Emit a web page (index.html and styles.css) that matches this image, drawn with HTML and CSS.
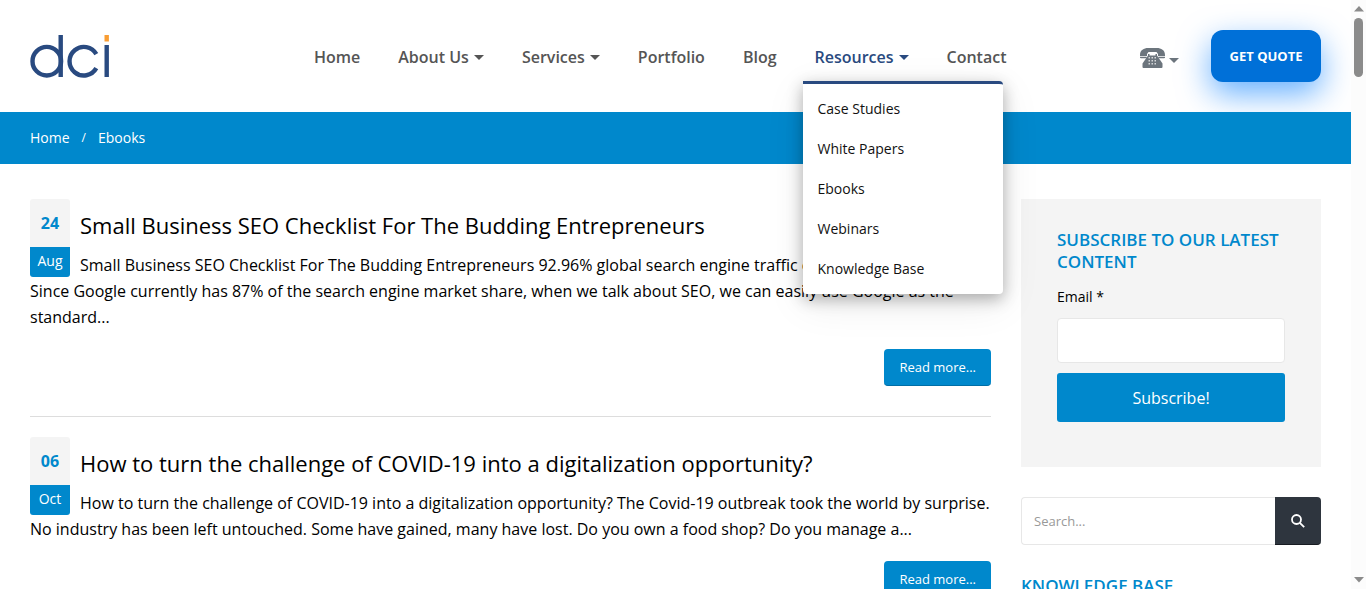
FILE: index.html
```html
<!DOCTYPE html>
<html lang="en">
<head>
<meta charset="utf-8">
<title>Ebooks</title>
<link rel="stylesheet" href="styles.css">
</head>
<body>
<div class="viewport">
  <div class="page">
    <header class="header">
      <a class="logo" href="#" aria-label="dci">
        <svg width="80" height="44" viewBox="0 0 80 44" fill="none" stroke="#294a80" stroke-width="4.4">
          <circle cx="16.8" cy="26.2" r="14.3"/>
          <path d="M30.700 0V42M76.700 10V42"/>
          <path d="M66.300 19.200A14.300 14.300 0 1 0 66.300 33.200"/>
          <path d="M76.700 0V6.500" stroke="#f99d33"/>
        </svg>
      </a>
      <nav class="nav">
        <a href="#">Home</a>
        <a href="#">About Us<i class="caret"></i></a>
        <a href="#">Services<i class="caret"></i></a>
        <a href="#">Portfolio</a>
        <a href="#">Blog</a>
        <div class="nav-open">
          <a class="active" href="#">Resources<i class="caret"></i></a>
          <ul class="menu">
            <li><a href="#">Case Studies</a></li>
            <li><a href="#">White Papers</a></li>
            <li><a href="#">Ebooks</a></li>
            <li><a href="#">Webinars</a></li>
            <li><a href="#">Knowledge Base</a></li>
          </ul>
        </div>
        <a href="#">Contact</a>
      </nav>
      <div class="actions">
        <button class="phone" type="button" aria-label="Phone numbers">
          <svg width="25" height="20" viewBox="0 0 25 20">
            <path fill="#6c757d" d="M0 7C0 2 4 0 8 0H17C21 0 25 2 25 7V8H18V6L16.500 4H8.500L7 6V8H0ZM0 8.800H6.500V9.600Q6.500 10.300 5.500 10.300H1Q0 10.300 0 9.600ZM18.500 8.800H25V9.600Q25 10.300 24 10.300H19.500Q18.500 10.300 18.500 9.600ZM8 6H9.500V7.500H15.500V6H17V7.500L22.500 15.500V19Q22.500 20 21.500 20H3.500Q2.500 20 2.500 19V15.500L8 7.500Z"/>
            <path fill="none" stroke="#d5d8da" stroke-width="1.500" stroke-dasharray="1.500 1.500" d="M8.500 9.800H16.500M8.500 12.800H16.500M8.500 15.800H16.500"/>
          </svg>
          <i class="caret"></i>
        </button>
        <a class="quote" href="#">GET QUOTE</a>
      </div>
    </header>
    <nav class="crumbs" aria-label="Breadcrumb">
      <a href="#">Home</a><span class="slash">/</span><a href="#">Ebooks</a>
    </nav>
    <div class="content">
      <main class="posts">
        <article class="post">
          <div class="date"><span class="day">24</span><span class="month">Aug</span></div>
          <h2><a href="#">Small Business SEO Checklist For The Budding Entrepreneurs</a></h2>
          <p>Small Business SEO Checklist For The Budding Entrepreneurs 92.96% global search engine traffic comes from Google.<br>Since Google currently has 87% of the search engine market share, when we talk about SEO, we can easily use Google as the<br>standard...</p>
          <div class="more"><a class="btn" href="#">Read more...</a></div>
        </article>
        <article class="post">
          <div class="date"><span class="day">06</span><span class="month">Oct</span></div>
          <h2><a href="#">How to turn the challenge of COVID-19 into a digitalization opportunity?</a></h2>
          <p>How to turn the challenge of COVID-19 into a digitalization opportunity? The Covid-19 outbreak took the world by surprise.<br>No industry has been left untouched. Some have gained, many have lost. Do you own a food shop? Do you manage a...</p>
          <div class="more"><a class="btn" href="#">Read more...</a></div>
        </article>
      </main>
      <aside class="sidebar">
        <form class="subscribe">
          <h3>SUBSCRIBE TO OUR LATEST CONTENT</h3>
          <label for="email">Email *</label>
          <input id="email" type="email">
          <button type="button">Subscribe!</button>
        </form>
        <form class="search">
          <input type="text" placeholder="Search..." aria-label="Search">
          <button type="button" aria-label="Search">
            <svg width="14" height="14" viewBox="0 0 14 14" fill="none" stroke="#fff" stroke-width="1.800"><circle cx="5.500" cy="5.500" r="4.500"/><path d="M8.800 8.800L13.200 13.200"/></svg>
          </button>
        </form>
        <h3>KNOWLEDGE BASE</h3>
      </aside>
    </div>
  </div>
  <div class="scrollbar" aria-hidden="true">
    <svg width="10" height="6" viewBox="0 0 10 6"><path fill="#8b8b8b" d="M5 0L10 5.500H0Z"/></svg>
    <div class="track"><div class="thumb"></div></div>
    <svg width="10" height="6" viewBox="0 0 10 6"><path fill="#8b8b8b" d="M0 0H10L5 5.500Z"/></svg>
  </div>
</div>
</body>
</html>
```
FILE: styles.css
```css
* { box-sizing: border-box; }
body { margin: 0; background: #fff; color: #000; font: 16px/26px "Open Sans", "Noto Sans", sans-serif; }
a { color: inherit; text-decoration: none; }
h2, h3, p, ul { margin: 0; padding: 0; }
.viewport { display: flex; height: 100vh; overflow: hidden; }
.page { flex: 1; min-width: 0; overflow: hidden; }

.header { display: grid; grid-template-columns: 284px 1fr auto; align-items: center; height: 112px; padding: 0 30px; }
.logo { display: flex; padding-top: 2px; }
.nav { display: flex; gap: 38px; color: #555; font-size: 16px; font-weight: 600; white-space: nowrap; padding-top: 2px; }
.active { color: #294a80; }
.caret { display: inline-block; margin-left: 5px; vertical-align: 3px; border: 5px solid transparent; border-top: 5px solid; border-bottom: 0; }
.nav-open { position: relative; }
.menu { position: absolute; z-index: 5; top: 37px; left: -12px; width: 200px; padding: 5px 15px; list-style: none; background: #fff; border-top: 3px solid #294a80; border-radius: 0 4px 4px 4px; box-shadow: 0 5px 16px rgba(0,0,0,.3), 0 10px 40px rgba(0,0,0,.08); color: #111; font-size: 14px; font-weight: 400; }
.menu a { display: block; line-height: 40px; }
.actions { display: flex; align-items: center; gap: 32px; }
.phone { display: flex; align-items: center; padding: 4px 0 0; border: 0; background: none; color: #6c757d; }
.phone .caret { margin: 4px 0 0 4px; }
.quote { min-width: 110px; text-align: center; border-radius: 12px; background: #0070d8; box-shadow: 0 12px 32px rgba(0,123,255,.6); color: #fff; font-size: 13px; font-weight: 700; line-height: 52px; }

.crumbs { position: relative; display: flex; height: 52px; padding: 0 30px; background: #0088cc; color: #fff; font-size: 14px; line-height: 52px; }
.slash { padding: 0 12px; font-size: 12px; }

.content { display: flex; gap: 30px; padding: 35px 30px 0; }
.posts { flex: 1; min-width: 0; }
.post { padding-bottom: 30px; margin-bottom: 20px; border-bottom: 1px solid #ddd; }
.date { float: left; width: 40px; margin-right: 10px; text-align: center; border-radius: 3px; overflow: hidden; }
.day { display: block; background: #f4f4f4; color: #0088cc; font-size: 16px; font-weight: 700; line-height: 48px; }
.month { display: block; background: #0088cc; color: #fff; font-size: 14px; line-height: 28px; padding-bottom: 2px; }
.post h2 { font-size: 22px; font-weight: 400; line-height: 53px; white-space: nowrap; }
.post p { white-space: nowrap; }
.more { display: flex; justify-content: flex-end; padding-top: 19px; }
.btn { padding: 0 15px; border-radius: 4px; background: #0088cc; border-bottom: 1px solid #006ea6; color: #fff; font-size: 13px; line-height: 36px; }

.sidebar { width: 300px; }
h3 { color: #0088cc; font-size: 17px; font-weight: 600; line-height: 22px; }
.subscribe { display: flex; flex-direction: column; padding: 30px 36px 45px; margin-bottom: 30px; background: #f4f4f4; }
.subscribe label { padding: 11px 0 8px; font-size: 14px; }
.subscribe input { height: 45px; border: 1px solid #e7e7e7; border-radius: 4px; background: #fff; }
.subscribe button { height: 49px; margin-top: 10px; border: 0; border-radius: 3px; background: #0088cc; color: #fff; font: 16px "Open Sans", sans-serif; }
.search { display: flex; height: 48px; margin-bottom: 30px; }
.search input { flex: 1; min-width: 0; padding: 0 12px; border: 1px solid #e7e7e7; border-right: 0; border-radius: 4px 0 0 4px; font: 13px "Open Sans", sans-serif; }
.search input::placeholder { color: #999; opacity: 1; }
.search button { width: 46px; padding: 0; border: 0; border-bottom: 1px solid #181c22; border-radius: 0 4px 4px 0; background: #2e353e; }
.search svg { display: block; margin: 0 auto; }

.scrollbar { display: flex; flex-direction: column; align-items: center; width: 15px; padding: 6px 0; background: #fcfcfc; }
.track { flex: 1; padding-top: 6px; }
.thumb { width: 9px; height: 59px; border-radius: 5px; background: #8b8b8b; }
```
